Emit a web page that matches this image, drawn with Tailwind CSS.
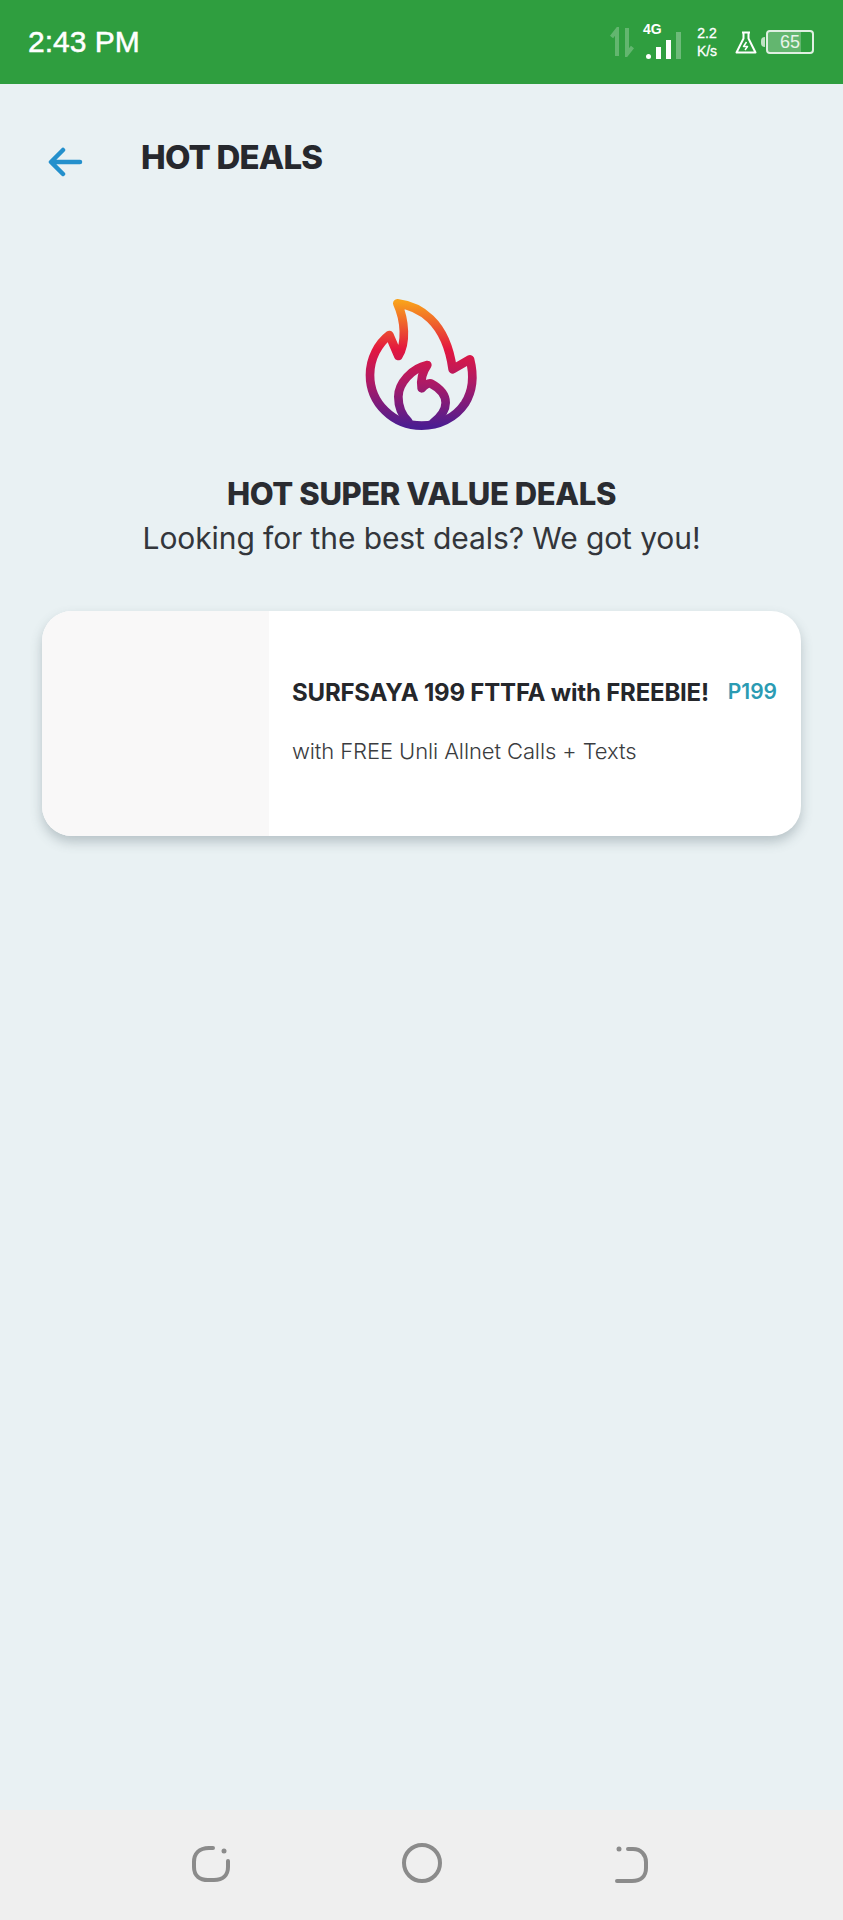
<!DOCTYPE html>
<html lang="en">

<head>
    <meta charset="UTF-8">
    <meta name="viewport" content="width=device-width, initial-scale=1.0">
    <title>Hot Deals</title>
    <script src="https://cdn.jsdelivr.net/npm/@tailwindcss/browser@4"></script>
</head>

<body class="w-[843px] h-[1920px] overflow-hidden bg-[#e9f1f3] flex flex-col font-['Inter',sans-serif]">
    <!-- status bar -->
    <div class="h-[84px] shrink-0 bg-[#2f9e3f] flex items-center pl-[28px] pr-[29px] text-white font-['Liberation_Sans',sans-serif]">
        <span class="text-[30px] leading-none [-webkit-text-stroke:0.5px_white]">2:43 PM</span>
        <div class="ml-auto flex items-center">
            <svg width="24" height="30" viewBox="0 0 24 30" class="opacity-25 mr-[8px]" fill="none" stroke="#fff" stroke-width="4">
                <path d="M7 29V3M1.500 10L7 3v7" />
                <path d="M17 1v26M22.500 20L17 27v-7" />
            </svg>
            <div class="relative w-[38px] h-[34px] mr-[14px]">
                <span class="absolute left-[1px] top-[-3px] text-[14px] leading-[14px] font-bold">4G</span>
                <div class="absolute left-[4px] bottom-0 flex items-end gap-[5px]">
                    <i class="block w-[5px] h-[5px] bg-white rounded-full"></i>
                    <i class="block w-[5px] h-[12px] bg-white"></i>
                    <i class="block w-[5px] h-[19px] bg-white"></i>
                    <i class="block w-[5px] h-[27px] bg-white/30"></i>
                </div>
            </div>
            <div class="w-[26px] text-center text-[14px] leading-[18px] [-webkit-text-stroke:0.3px_white] mr-[15px]">2.2<br>K/s</div>
            <svg width="22" height="23" viewBox="0 0 22 23" fill="none" stroke="#fff" stroke-width="2" stroke-linejoin="round" class="mr-[4px]">
                <path d="M7 1.500h8M8.500 1.500v6L1.500 21.500h19L13.500 7.500v-6" />
                <path d="M11.500 11l-3 4.500h4l-2.500 3.500" stroke-width="1.500" />
            </svg>
            <div class="w-[4px] h-[10px] bg-white/70 rounded-l-sm mr-[1px]"></div>
            <div class="relative w-[48px] h-[24px] border-2 border-white/85 rounded-[4px] overflow-hidden flex items-center justify-center">
                <div class="absolute left-0 top-0 bottom-0 w-[33px] bg-white/25"></div>
                <span class="relative text-[18px] leading-none text-white/85">65</span>
            </div>
        </div>
    </div>

    <!-- header -->
    <div class="h-[72px] shrink-0 mt-[38px] flex items-start">
        <svg width="36" height="32" viewBox="0 0 36 32" fill="none" stroke="#2490cc" stroke-width="4.500" stroke-linecap="round" stroke-linejoin="round" class="ml-[48px] mt-[24px]">
            <path d="M32 16H4M15 4L3 16l12 12" />
        </svg>
        <h1 class="ml-[57px] mt-[15px] text-[33px] leading-[40px] font-extrabold text-[#26282d] tracking-[-0.8px]">HOT DEALS</h1>
    </div>

    <!-- hero -->
    <div class="flex flex-col items-center mt-[86px]">
        <svg width="160" height="160" viewBox="6 0 480 480" fill="none" stroke="url(#flame)" stroke-width="26" stroke-linecap="round" stroke-linejoin="round">
            <defs>
                <linearGradient id="flame" gradientUnits="userSpaceOnUse" x1="245" y1="65" x2="245" y2="440">
                    <stop offset="0" stop-color="#f9a11b" />
                    <stop offset="0.38" stop-color="#e3173f" />
                    <stop offset="0.65" stop-color="#ad1a66" />
                    <stop offset="1" stop-color="#4b1d91" />
                </linearGradient>
            </defs>
            <path d="M172 70C235 78 318 120 338 268L390 238C402 285 400 330 375 370C345 415 295 437 245 437C160 437 90 370 90 285C90 235 115 190 148 165L175 228C200 190 195 120 172 70Z" />
            <path d="M205 425C185 405 175 380 175 350C175 310 215 265 262 255C248 275 240 295 245 325C255 315 265 308 272 310C300 325 317 345 317 368C317 390 300 412 280 428" />
        </svg>
        <h2 class="mt-[35px] text-[31px] leading-[38px] font-extrabold text-[#2a2c31] tracking-[-0.4px]">HOT SUPER VALUE DEALS</h2>
        <p class="mt-[5px] text-[30px] leading-[40px] text-[#33363b] font-normal tracking-[-0.1px]">Looking for the best deals? We got you!</p>
    </div>

    <!-- deal card -->
    <div class="mx-[42px] mt-[53px] h-[225px] rounded-[30px] overflow-hidden bg-white flex shadow-[0_6px_12px_rgba(70,90,100,0.3)]">
        <div class="w-[227px] shrink-0 bg-[#f9f8f8]"></div>
        <div class="flex-1 pl-[23px] pr-[24px] pt-[66px]">
            <div class="flex items-start justify-between">
                <span class="text-[24px] leading-[32px] font-bold text-[#25272b] tracking-[-0.2px]">SURFSAYA 199 FTTFA with FREEBIE!</span>
                <span class="text-[21px] leading-[30px] font-semibold text-[#2b9bb3]">P199</span>
            </div>
            <p class="mt-[27px] text-[22px] leading-[30px] font-light text-[#3a3c40] tracking-[-0.1px]">with FREE Unli Allnet Calls + Texts</p>
        </div>
    </div>

    <!-- nav bar -->
    <div class="mt-auto h-[110px] shrink-0 bg-[#efefef] relative">
        <svg width="843" height="110" viewBox="0 0 843 110" fill="none" stroke="#8b8b8b" stroke-width="4" stroke-linecap="round">
            <path d="M213 38H209C199 38 194 44 194 52V57C194 66 200 70 208 70H214C223 70 228 65 228 57V51" />
            <circle cx="224" cy="41" r="2.500" fill="#8b8b8b" stroke="none" />
            <circle cx="422" cy="53" r="18" />
            <path d="M628 39H633C641 39 646 45 646 52V58C646 66 641 71 632 71H617" />
            <circle cx="619" cy="39" r="2.500" fill="#8b8b8b" stroke="none" />
        </svg>
    </div>
</body>

</html>
